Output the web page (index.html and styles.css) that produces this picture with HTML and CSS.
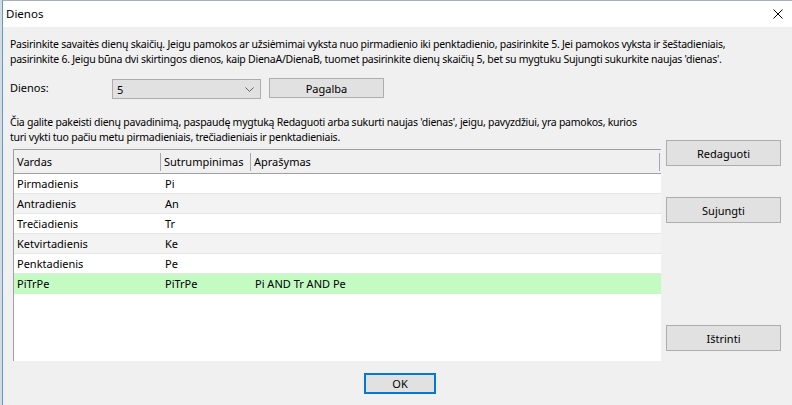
FILE: index.html
```html
<!DOCTYPE html>
<html lang="lt">
<head>
    <meta charset="UTF-8">
    <link rel="stylesheet" href="styles.css">
</head>
<body>
    <div class="window">
        <!-- antraštė -->
        <div class="titlebar">
            <span class="title">Dienos</span>
            <svg class="close" width="10" height="10" viewBox="0 0 10 10">
                <path d="M0.5 0.5 L9.5 9.5 M9.5 0.5 L0.5 9.5" stroke="#000" stroke-width="1" fill="none"/>
            </svg>
        </div>

        <div class="content">
            <p class="intro">Pasirinkite savaitės dienų skaičių. Jeigu pamokos ar užsiėmimai vyksta nuo pirmadienio iki penktadienio, pasirinkite 5. Jei pamokos vyksta ir šeštadieniais,<br>pasirinkite 6. Jeigu būna dvi skirtingos dienos, kaip DienaA/DienaB, tuomet pasirinkite dienų skaičių 5, bet su mygtuku Sujungti sukurkite naujas 'dienas'.</p>

            <div class="main">
                <div class="left">
                    <div class="days-row">
                        <label class="days-label">Dienos:</label>
                        <div class="combo">
                            <span>5</span>
                            <svg width="9" height="5" viewBox="0 0 9 5">
                                <path d="M0.5 0.5 L4.5 4.5 L8.5 0.5" stroke="#606060" stroke-width="1" fill="none"/>
                            </svg>
                        </div>
                        <button class="btn help-btn">Pagalba</button>
                    </div>

                    <p class="hint">Čia galite pakeisti dienų pavadinimą, paspaudę mygtuką Redaguoti arba sukurti naujas 'dienas', jeigu, pavyzdžiui, yra pamokos, kurios<br>turi vykti tuo pačiu metu pirmadieniais, trečiadieniais ir penktadieniais.</p>

                    <!-- dienų sąrašas -->
                    <div class="list">
                        <div class="list-head">
                            <div class="col">Vardas</div>
                            <div class="col">Sutrumpinimas</div>
                            <div class="col">Aprašymas</div>
                        </div>
                        <div class="list-row">
                            <div class="cell">Pirmadienis</div><div class="cell">Pi</div><div class="cell"></div>
                        </div>
                        <div class="list-row alt">
                            <div class="cell">Antradienis</div><div class="cell">An</div><div class="cell"></div>
                        </div>
                        <div class="list-row">
                            <div class="cell">Trečiadienis</div><div class="cell">Tr</div><div class="cell"></div>
                        </div>
                        <div class="list-row alt">
                            <div class="cell">Ketvirtadienis</div><div class="cell">Ke</div><div class="cell"></div>
                        </div>
                        <div class="list-row">
                            <div class="cell">Penktadienis</div><div class="cell">Pe</div><div class="cell"></div>
                        </div>
                        <div class="list-row joined">
                            <div class="cell">PiTrPe</div><div class="cell">PiTrPe</div><div class="cell">Pi AND Tr AND Pe</div>
                        </div>
                    </div>
                </div>

                <div class="side">
                    <button class="btn side-btn">Redaguoti</button>
                    <button class="btn side-btn join-btn">Sujungti</button>
                    <button class="btn side-btn delete-btn">Ištrinti</button>
                </div>
            </div>

            <div class="footer">
                <button class="btn ok-btn">OK</button>
            </div>
        </div>
    </div>
</body>
</html>
```

FILE: styles.css
```css
* {
    box-sizing: border-box;
    margin: 0;
    padding: 0;
}

body {
    width: 792px;
    height: 405px;
    overflow: hidden;
    background: #d6dbe0;
    font-family: "Noto Sans", "Open Sans", sans-serif;
    font-size: 11px;
    color: #000;
}

.window {
    margin-left: 2px;
    height: 405px;
    background: #f0f0f0;
    border-top: 1px solid #a7b0ba;
    border-left: 1px solid #5d9ad8;
}

.titlebar {
    height: 26px;
    background: #fff;
    display: flex;
    align-items: center;
    justify-content: space-between;
    padding: 0 9px 0 3px;
}

.title {
    font-size: 11.5px;
    line-height: 16px;
}

.content {
    padding: 10px 0 0 7px;
}

.intro,
.hint {
    font-size: 10.5px;
    line-height: 15px;
    white-space: nowrap;
    letter-spacing: -0.25px;
}

.main {
    display: flex;
    gap: 5px;
}

.left {
    flex: none;
    width: 651px;
}

.days-row {
    display: flex;
    align-items: flex-start;
    margin-top: 11px;
}

.days-label {
    width: 102px;
    margin-top: 2px;
    line-height: 15px;
}

.combo {
    width: 149px;
    height: 20px;
    margin-top: 1px;
    margin-right: 8px;
    display: flex;
    align-items: center;
    justify-content: space-between;
    padding: 0 6px 0 4px;
    background: #e1e1e1;
    border: 1px solid #adadad;
}

.btn {
    font-family: inherit;
    font-size: 11px;
    color: #000;
    background: #e1e1e1;
    border: 1px solid #adadad;
}

.help-btn {
    width: 115px;
    height: 20px;
}

.hint {
    margin-top: 16px;
}

/* sąrašas */
.list {
    margin: 4px 0 0 3px;
    width: 648px;
    height: 212px;
    background: #fff;
    border-top: 1px solid #a0a0a0;
    border-left: 1px solid #a0a0a0;
}

.list-head {
    display: grid;
    grid-template-columns: 147px 90px 409px;
    align-items: center;
    height: 24px;
    background: #f0f0f0;
    border-bottom: 1px solid #a0a0a0;
}

.col {
    height: 18px;
    line-height: 18px;
    padding-left: 3px;
    white-space: nowrap;
    border-right: 1px solid #a4a8b4;
}

.list-row {
    display: grid;
    grid-template-columns: 147px 90px 1fr;
    height: 20px;
    line-height: 19px;
    border-bottom: 1px solid #e6e6e6;
}

.list-row.alt {
    background: #f3f3f3;
}

.list-row.joined {
    background: #c3fbc3;
    border-bottom: none;
}

.cell {
    padding-left: 3px;
}

.cell:nth-child(2),
.cell:nth-child(3) {
    padding-left: 4px;
}

/* dešinės mygtukai */
.side {
    display: flex;
    flex-direction: column;
    margin-top: 73px;
}

.side-btn {
    width: 115px;
    height: 26px;
}

.join-btn {
    margin-top: 31px;
}

.delete-btn {
    margin-top: 102px;
}

.footer {
    display: flex;
    justify-content: center;
    margin-top: 12px;
    padding-right: 2px;
}

.ok-btn {
    width: 72px;
    height: 21px;
    border: 2px solid #0078d7;
}
```
